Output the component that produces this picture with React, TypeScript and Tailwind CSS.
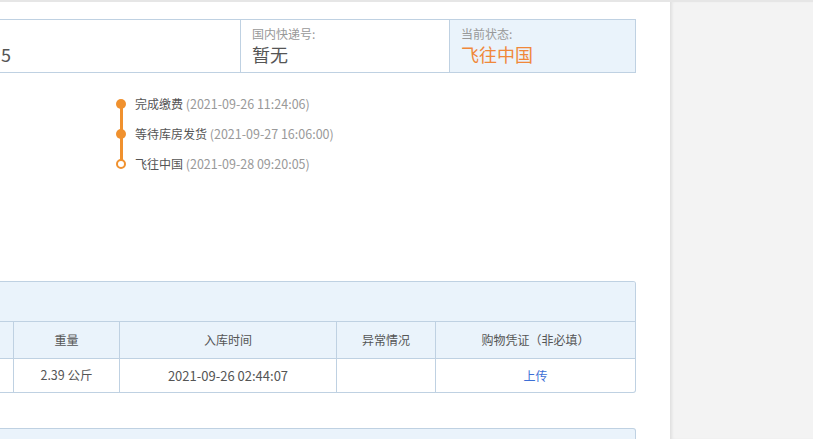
import React from "react";

const steps = [
  { name: "完成缴费", time: "2021-09-26 11:24:06" },
  { name: "等待库房发货", time: "2021-09-27 16:06:00" },
  { name: "飞往中国", time: "2021-09-28 09:20:05" },
];

export default function App() {
  return (
    <div
      className="w-[813px] h-[439px] overflow-hidden flex bg-[#f3f3f3]"
      style={{ fontFamily: '"Noto Sans CJK SC", "Microsoft YaHei", sans-serif' }}
    >
      {/* main white panel */}
      <div className="w-[670px] h-full bg-white flex flex-col shrink-0 border-t-2 border-[#e6e6e6]">
        <div className="pt-[17px] pr-[34px]">
          {/* shipping info box */}
          <div className="flex h-[54px] border border-l-0 border-[#bfd1e2]">
            <div className="w-[241px] border-r border-[#bfd1e2] flex flex-col justify-center overflow-hidden">
              <span className="text-[12px] leading-[16px] text-transparent">运单号:</span>
              <span className="text-[18px] leading-[24px] text-[#555] pl-[1px]">5</span>
            </div>
            <div className="w-[209px] border-r border-[#bfd1e2] flex flex-col justify-center pl-[11px]">
              <span className="text-[12px] leading-[16px] text-[#999]">国内快递号:</span>
              <span className="text-[18px] leading-[24px] text-[#555]">暂无</span>
            </div>
            <div className="flex-1 bg-[#eaf3fb] flex flex-col justify-center pl-[11px]">
              <span className="text-[12px] leading-[16px] text-[#999]">当前状态:</span>
              <span className="text-[18px] leading-[24px] text-[#f0883a]">飞往中国</span>
            </div>
          </div>

          {/* timeline */}
          <div className="relative ml-[116px] mt-[16px] h-[180px]">
            <div className="absolute left-[4px] top-[12px] w-[3px] h-[60px] bg-[#f0912e]" />
            {steps.map((s, i) => (
              <div key={s.name} className="flex items-center h-[30px] relative">
                <span
                  className={`w-[10px] h-[10px] rounded-full shrink-0 relative z-10 ${
                    i === steps.length - 1 ? "bg-white border-2 border-[#f0912e]" : "bg-[#f0912e]"
                  }`}
                />
                <span className="ml-[9px] text-[12px] text-[#555]">
                  {s.name} <span className="text-[12.5px] text-[#999]">({s.time})</span>
                </span>
              </div>
            ))}
          </div>

          {/* parcel table */}
          <div className="mt-[12px] border border-l-0 border-[#bfd1e2] rounded-tr-[3px] rounded-br-[3px] overflow-hidden">
            <div className="h-[40px] bg-[#eaf3fb] border-b border-[#bfd1e2]" />
            <div className="grid grid-cols-[14px_106px_217px_99px_1fr] h-[37px] bg-[#eaf3fb] border-b border-[#bfd1e2] text-[12px] text-[#555]">
              <div className="border-r border-[#bfd1e2]" />
              <div className="border-r border-[#bfd1e2] flex items-center justify-center">重量</div>
              <div className="border-r border-[#bfd1e2] flex items-center justify-center">入库时间</div>
              <div className="border-r border-[#bfd1e2] flex items-center justify-center">异常情况</div>
              <div className="flex items-center justify-center">购物凭证（非必填）</div>
            </div>
            <div className="grid grid-cols-[14px_106px_217px_99px_1fr] h-[33px] text-[12px] text-[#555]">
              <div className="border-r border-[#bfd1e2]" />
              <div className="border-r border-[#bfd1e2] flex items-center justify-center text-[12.5px]">2.39 公斤</div>
              <div className="border-r border-[#bfd1e2] flex items-center justify-center text-[13px]">2021-09-26 02:44:07</div>
              <div className="border-r border-[#bfd1e2]" />
              <div className="flex items-center justify-center text-[#3d6fd6]">上传</div>
            </div>
          </div>

          {/* next section */}
          <div className="mt-[35px] h-[40px] bg-[#eaf3fb] border border-l-0 border-[#bfd1e2] rounded-tr-[3px]" />
        </div>
      </div>
      {/* right side */}
      <div className="flex-1 h-full border-t-2 border-[#e6e6e6] bg-[#f3f3f3] shadow-[inset_3px_0_3px_-1px_rgba(0,0,0,0.08)]" />
    </div>
  );
}
